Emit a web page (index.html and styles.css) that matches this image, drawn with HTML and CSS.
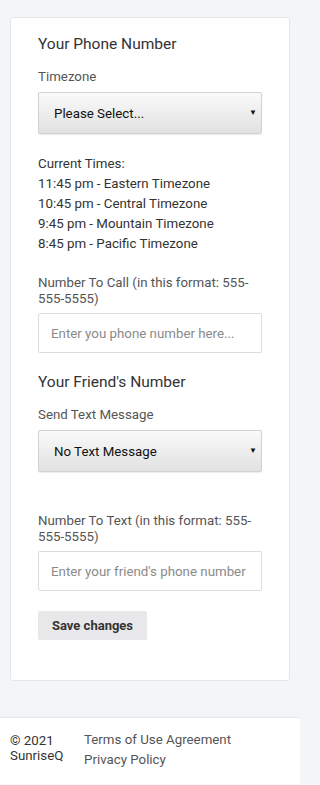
FILE: index.html
```html
<!DOCTYPE html>
<html lang="en">
<head>
<meta charset="utf-8">
<title>Phone settings</title>
<link rel="stylesheet" href="styles.css">
</head>
<body>
<main class="main">
  <form class="card">
    <h2 class="heading">Your Phone Number</h2>
    <label class="label">Timezone</label>
    <div class="select-wrap">
      <select class="select"><option>Please Select...</option></select>
      <span class="arrow">&#9660;</span>
    </div>
    <div class="times">
      <div>Current Times:</div>
      <div>11:45 pm - Eastern Timezone</div>
      <div>10:45 pm - Central Timezone</div>
      <div>9:45 pm - Mountain Timezone</div>
      <div>8:45 pm - Pacific Timezone</div>
    </div>
    <label class="label label-wrap">Number To Call (in this format: 555-555-5555)</label>
    <input class="input" type="text" placeholder="Enter you phone number here...">
    <h2 class="heading heading-2">Your Friend's Number</h2>
    <label class="label">Send Text Message</label>
    <div class="select-wrap">
      <select class="select"><option>No Text Message</option></select>
      <span class="arrow">&#9660;</span>
    </div>
    <label class="label label-wrap label-text">Number To Text (in this format: 555-555-5555)</label>
    <input class="input" type="text" placeholder="Enter your friend's phone number here...">
    <button class="btn" type="button">Save changes</button>
  </form>
</main>
<footer class="footer">
  <div class="copy">© 2021 SunriseQ</div>
  <div class="links">
    <a href="#">Terms of Use Agreement</a>
    <a href="#">Privacy Policy</a>
  </div>
</footer>
</body>
</html>
```
FILE: styles.css
```css
* { box-sizing: border-box; }
html, body { margin: 0; padding: 0; }
body {
  background: #f3f6f8;
  font-family: Roboto, "Liberation Sans", sans-serif;
  color: #333;
  width: 300px;
}
.main { padding: 17px 10px 36px; }
.card {
  display: flex;
  flex-direction: column;
  align-items: flex-start;
  background: #fff;
  border: 1px solid #e4e7ea;
  border-radius: 3px;
  padding: 16px 27px 40px;
}
.heading {
  margin: 0;
  font-size: 15.5px;
  font-weight: 400;
  line-height: 20px;
  color: #333;
}
.heading-2 { margin-top: 19px; }
.label {
  display: block;
  margin-top: 14px;
  font-size: 13.3px;
  line-height: 18px;
  color: #555;
}
.label-wrap { line-height: 16px; margin-top: 21px; }
.label-text { margin-top: 41px; }
.select-wrap {
  position: relative;
  width: 100%;
  margin-top: 6px;
}
.select {
  display: block;
  width: 100%;
  height: 42px;
  appearance: none;
  -webkit-appearance: none;
  border: 1px solid #d2d2d2;
  border-radius: 2px;
  background: linear-gradient(#fafafa, #e1e1e1);
  box-shadow: 0 1px 1px rgba(0,0,0,0.08);
  padding: 0 0 0 15px;
  font-family: Roboto, "Liberation Sans", sans-serif;
  font-size: 13.3px;
  color: #111;
}
.arrow {
  position: absolute;
  right: 5px;
  top: 16px;
  font-size: 8px;
  line-height: 10px;
  color: #111;
  pointer-events: none;
}
.times {
  margin-top: 20px;
  font-size: 13.3px;
  line-height: 20px;
  color: #333;
}
.input {
  display: block;
  width: 100%;
  height: 40px;
  margin-top: 6px;
  border: 1px solid #dcdcdc;
  border-radius: 2px;
  padding: 0 12px;
  font-family: Roboto, "Liberation Sans", sans-serif;
  font-size: 13.3px;
  color: #333;
  background: #fff;
}
.input::placeholder { color: #8a8a8a; }
.btn {
  margin-top: 20px;
  height: 29px;
  padding: 0 14px;
  border: 0;
  border-radius: 2px;
  background: #e8e7e9;
  font-family: Roboto, "Liberation Sans", sans-serif;
  font-size: 13px;
  font-weight: 700;
  color: #333;
}
.footer {
  display: flex;
  background: #fff;
  border-top: 1px solid #e4e7ea;
  padding: 15px 10px 20px;
  height: 67px;
}
.copy {
  width: 74px;
  font-size: 13.3px;
  line-height: 15px;
  color: #333;
}
.links {
  display: flex;
  flex-direction: column;
  font-size: 13.3px;
  line-height: 20px;
  margin-top: -3px;
}
.links a { color: #555; text-decoration: none; }
```
